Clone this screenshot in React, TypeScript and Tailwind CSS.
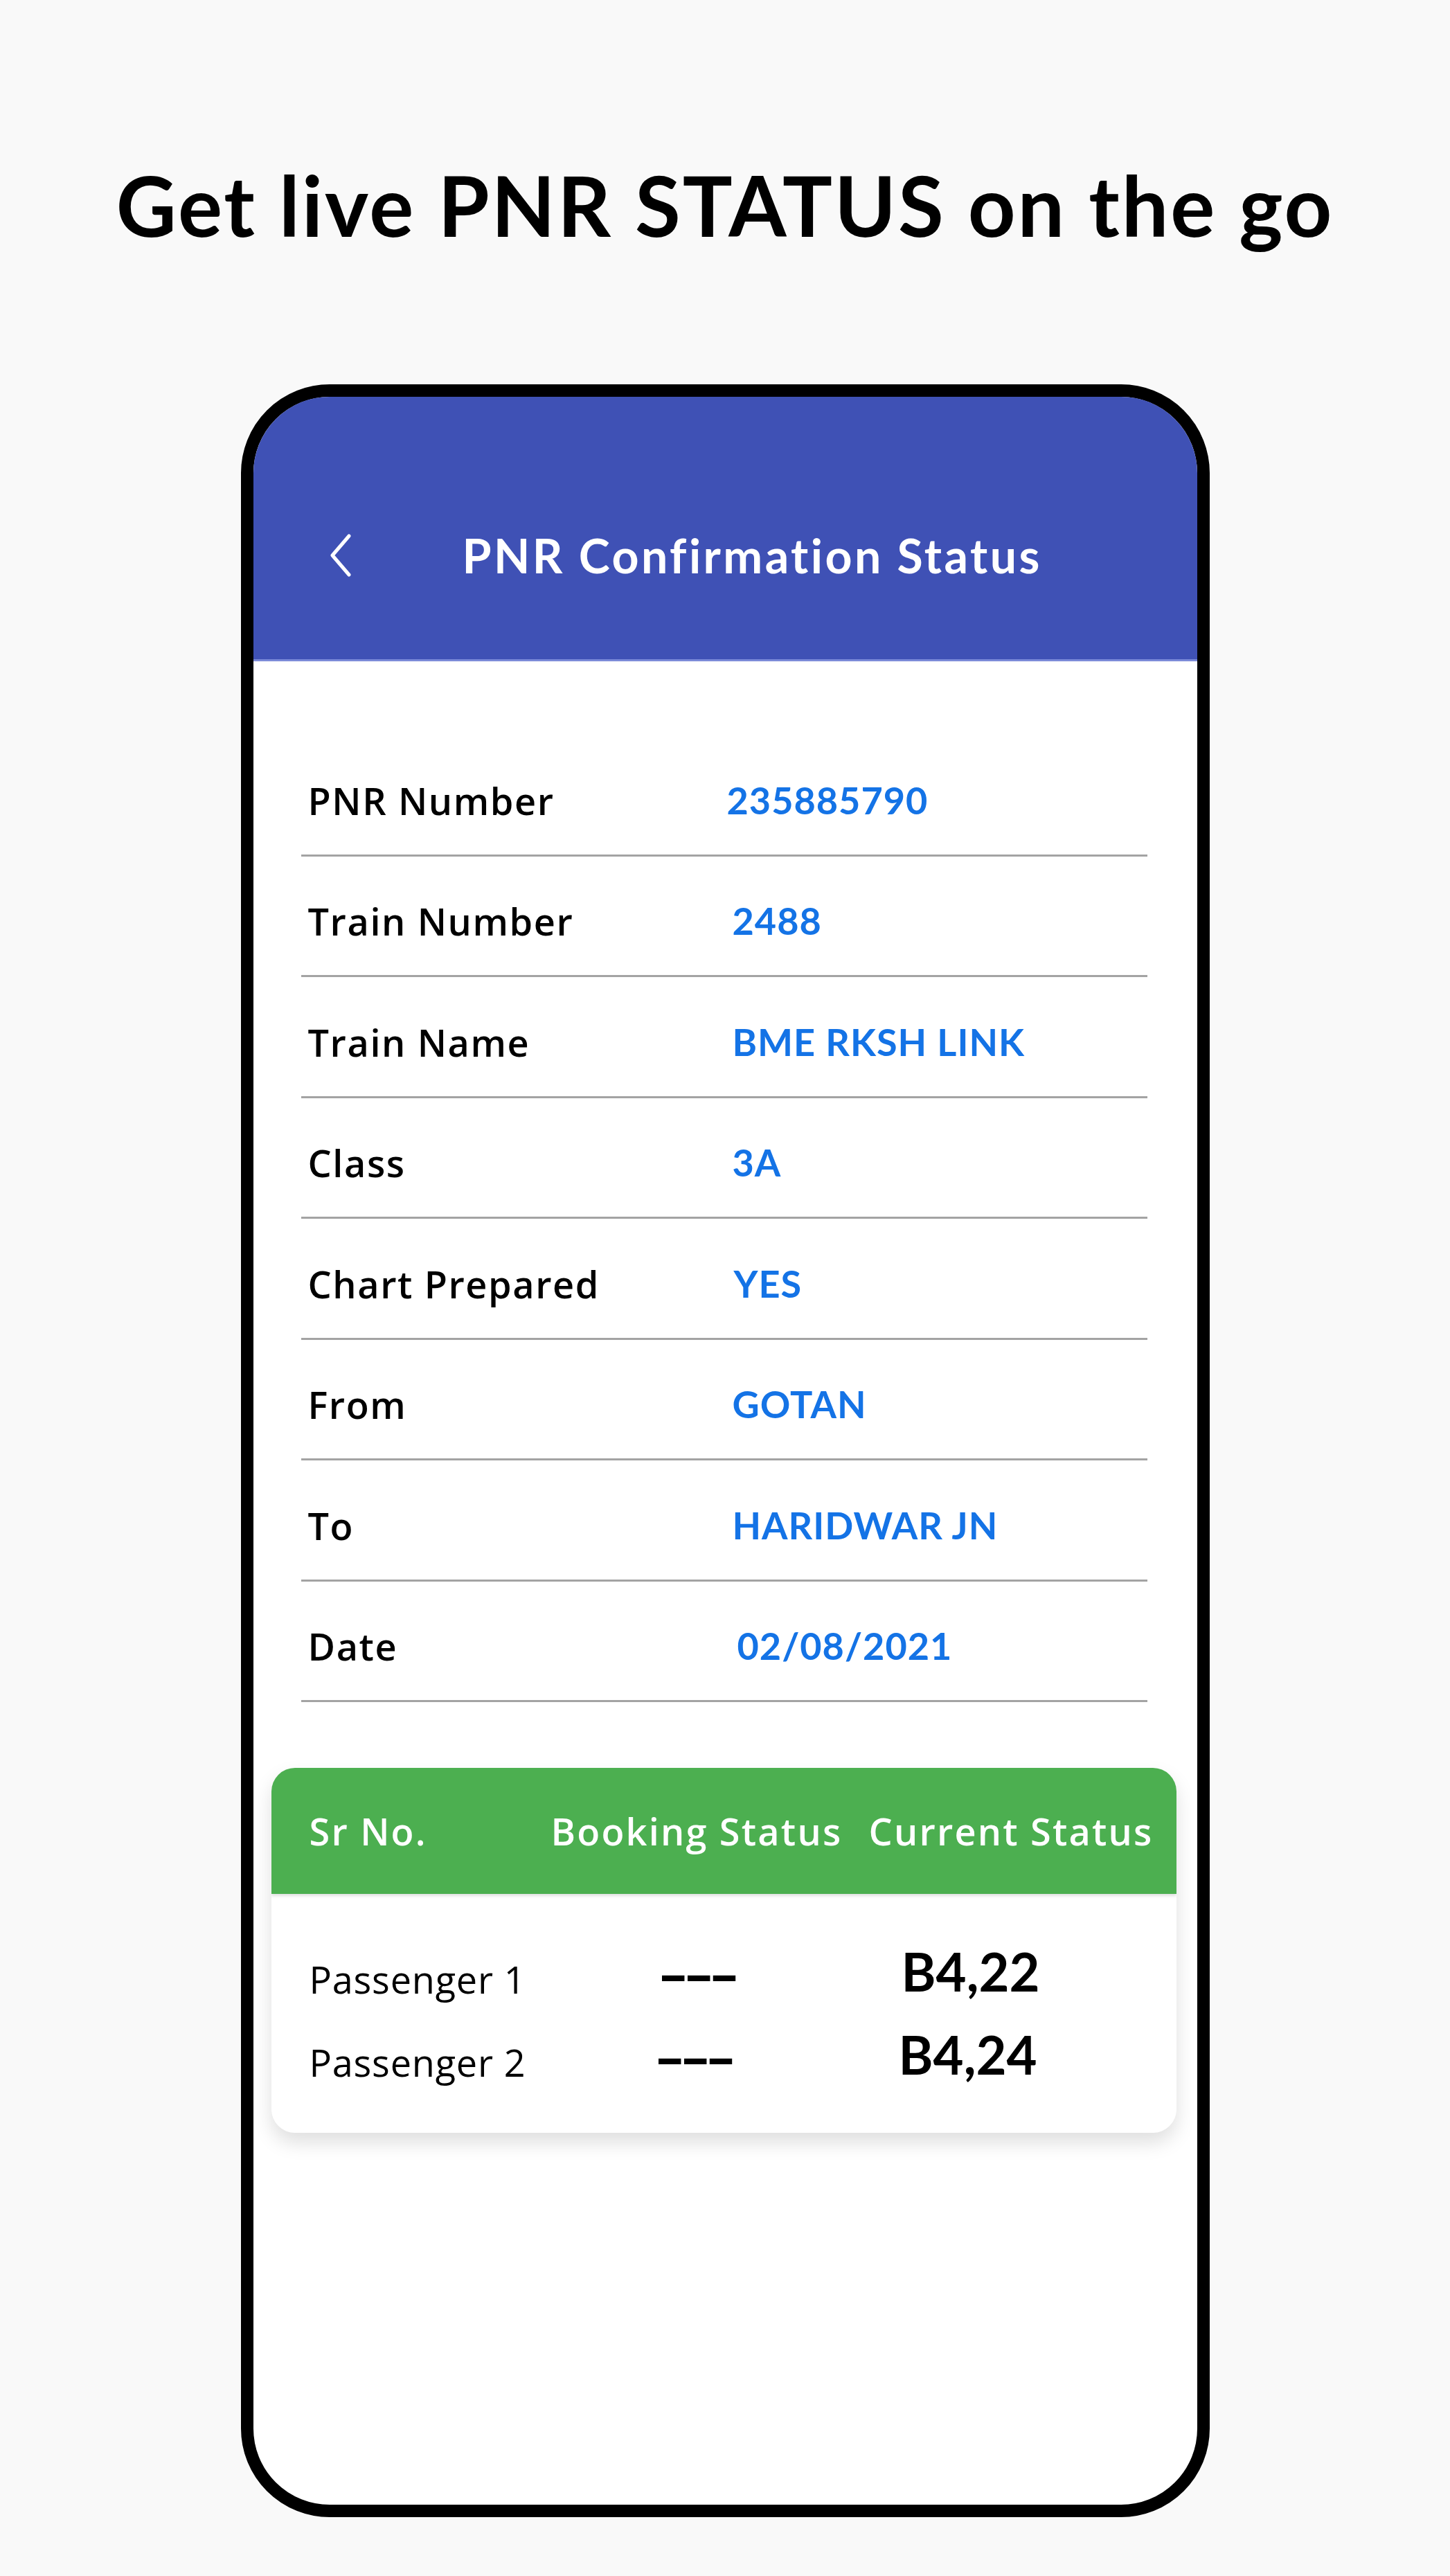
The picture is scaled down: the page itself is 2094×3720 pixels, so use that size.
import React from "react";

const rows: { label: string; value: string; off: string }[] = [
  { label: "PNR Number", value: "235885790", off: "ml-[-8px]" },
  { label: "Train Number", value: "2488", off: "ml-0" },
  { label: "Train Name", value: "BME RKSH LINK", off: "ml-0" },
  { label: "Class", value: "3A", off: "ml-0" },
  { label: "Chart Prepared", value: "YES", off: "ml-[2px]" },
  { label: "From", value: "GOTAN", off: "ml-0" },
  { label: "To", value: "HARIDWAR JN", off: "ml-0" },
  { label: "Date", value: "02/08/2021", off: "ml-[7px]" },
];

export default function App() {
  return (
    <div className="w-[2094px] h-[3720px] bg-[#f9f9f9] flex flex-col items-center font-['Lato',sans-serif]">
      <h1 className="mt-[236px] text-[120px] leading-none font-bold text-black tracking-[2.9px]">
        Get live PNR STATUS on the go
      </h1>

      <div className="mt-[199px] w-[1399px] h-[3080px] border-[18px] border-black rounded-[128px] bg-white overflow-hidden flex flex-col">
        <div className="h-[382px] shrink-0 bg-[#3f51b5] border-b-[3px] border-[#7c8bd9] flex items-center pt-[78px]">
          <svg className="ml-[109px] w-[34px] h-[62px]" viewBox="0 0 34 62" fill="none">
            <polyline points="29,3 5,31 29,59" stroke="white" strokeWidth="5" strokeLinecap="round" strokeLinejoin="round" />
          </svg>
          <div className="ml-[159px] text-[68px] font-bold text-white leading-none tracking-[3.4px]">PNR Confirmation Status</div>
        </div>

        <div className="pt-[107px] flex flex-col">
          {rows.map((r) => (
            <div
              key={r.label}
              className="ml-[69px] mr-[72px] h-[174.5px] border-b-[3px] border-[#a3a3a3] flex items-center pt-[16px]"
            >
              <div className="w-[623px] pl-[10px] text-[54px] font-semibold text-black leading-none font-['Open_Sans',sans-serif] tracking-[1.6px]">{r.label}</div>
              <div className={`${r.off} text-[54px] font-bold text-[#1473e6] leading-none tracking-[1px]`}>{r.value}</div>
            </div>
          ))}
        </div>

        <div className="mt-[95px] ml-[26px] mr-[30px] h-[527px] rounded-[34px] bg-white shadow-[0_14px_28px_rgba(0,0,0,0.13)] overflow-hidden flex flex-col">
          <div className="h-[182px] shrink-0 bg-[#4caf50] flex items-center shadow-[0_3px_4px_rgba(0,0,0,0.12)] text-white text-[54px] font-semibold leading-none font-['Open_Sans',sans-serif] tracking-[2.2px]">
            <div className="w-[404px] pl-[55px]">Sr No.</div>
            <div className="w-[459px]">Booking Status</div>
            <div>Current Status</div>
          </div>
          <div className="pt-[84px] flex flex-col gap-[54px]">
            {[
              { p: "Passenger 1", b: "---", c: "B4,22", bo: "pl-[155px]", co: "pl-[47px]" },
              { p: "Passenger 2", b: "---", c: "B4,24", bo: "pl-[150px]", co: "pl-[43px]" },
            ].map((x) => (
              <div key={x.p} className="flex items-end text-black leading-none h-[66px]">
                <div className="w-[404px] pl-[55px] text-[54px] font-normal font-['Open_Sans',sans-serif] tracking-[0.8px]">{x.p}</div>
                <div className={`w-[459px] ${x.bo}`}>
                  <span className="inline-block origin-left scale-x-[1.88] text-[68px] font-bold font-['Liberation_Sans',sans-serif] tracking-[-3px]">{x.b}</span>
                </div>
                <div className={`${x.co} text-[76px] font-bold`}>{x.c}</div>
              </div>
            ))}
          </div>
        </div>
      </div>
    </div>
  );
}
